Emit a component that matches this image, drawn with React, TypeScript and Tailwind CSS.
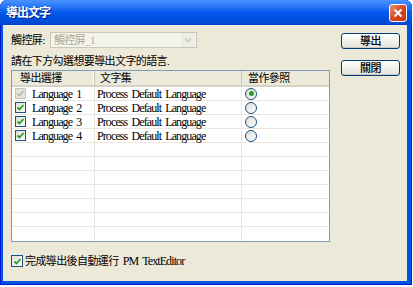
const rows = [
  { name: 'Language 1', set: 'Process Default Language', checked: true, disabled: true, ref: true },
  { name: 'Language 2', set: 'Process Default Language', checked: true, disabled: false, ref: false },
  { name: 'Language 3', set: 'Process Default Language', checked: true, disabled: false, ref: false },
  { name: 'Language 4', set: 'Process Default Language', checked: true, disabled: false, ref: false },
]

const empty = Array.from({ length: 7 })

function CheckBox({ checked, disabled, size = 11 }: { checked: boolean; disabled?: boolean; size?: number }) {
  return (
    <span
      className={
        'flex shrink-0 items-center justify-center border ' +
        (disabled ? 'border-[#C9C7BA] bg-[#E6E4DA]' : 'border-[#1C5180] bg-gradient-to-br from-[#DCDCD7] to-white')
      }
      style={{ width: size, height: size }}
    >
      {checked && (
        <svg width="9" height="9" viewBox="0 0 9 9">
          <path
            d="M1.5 4.5 L3.5 6.5 L7.5 2"
            fill="none"
            stroke={disabled ? '#BEBCB0' : '#21A121'}
            strokeWidth="1.8"
          />
        </svg>
      )}
    </span>
  )
}

function Radio({ on }: { on: boolean }) {
  return (
    <span className="flex h-[12px] w-[12px] items-center justify-center rounded-full border border-[#1C5180] bg-gradient-to-br from-[#DCDCD7] to-white">
      {on && <span className="h-[5px] w-[5px] rounded-full bg-[#21A121]" />}
    </span>
  )
}

function XpButton({ label }: { label: string }) {
  return (
    <button className="flex h-[16px] w-[59px] items-center justify-center rounded-[3px] border border-[#003C74] bg-gradient-to-b from-white to-[#E3E3DB] text-[11px] font-medium leading-none text-black shadow-[inset_0_-1px_0_#CDCAC3]">
      {label}
    </button>
  )
}

export default function App() {
  return (
    <div className="h-[287px] w-[413px] bg-white font-['Liberation_Serif','Noto_Sans_CJK_TC',serif] text-[11px] tracking-[-0.6px] text-black">
      <div className="flex h-[285px] w-[412px] flex-col overflow-hidden rounded-t-[7px] bg-[#0055E5] shadow-[inset_0_0_0_1px_#0019CF]">
        <div className="flex h-[25px] shrink-0 items-center justify-between bg-gradient-to-b from-[#4A94FF] via-[#0058EE] to-[#0047CC] pl-[6px] pr-[5px]">
          <span className="text-[12px] font-bold tracking-[-1px] text-white [text-shadow:1px_1px_0_#0A1E7A]">
            導出文字
          </span>
          <span className="flex h-[18px] w-[18px] items-center justify-center rounded-[3px] border border-white bg-gradient-to-br from-[#E9906E] via-[#D9461F] to-[#C0370F]">
            <svg width="10" height="10" viewBox="0 0 10 10">
              <path d="M1.5 1.5 L8.5 8.5 M8.5 1.5 L1.5 8.5" stroke="white" strokeWidth="2" />
            </svg>
          </span>
        </div>

        <div className="mb-[4px] ml-[3px] mr-[5px] flex flex-1 bg-[#ECE9D8] pl-[8px]">
          <div className="flex w-[319px] flex-col">
            <div className="mt-[7px] flex h-[16px] items-center">
              <span className="w-[39px]">觸控屏:</span>
              <div className="flex h-[16px] w-[147px] items-center border border-[#C9C7BA] bg-[#F5F4EA]">
                <span className="flex-1 pl-[3px] text-[#ACA899]">觸控屏_1</span>
                <span className="mr-px flex h-[14px] w-[14px] items-center justify-center bg-[#EEEDE5]">
                  <svg width="8" height="6" viewBox="0 0 8 6">
                    <path d="M1 1.5 L4 4.5 L7 1.5" fill="none" stroke="#C9C7BA" strokeWidth="1.4" />
                  </svg>
                </span>
              </div>
            </div>

            <p className="mt-[7px] h-[13px] leading-[13px]">請在下方勾選想要導出文字的語言.</p>

            <div className="mt-[2px] flex h-[172px] flex-col border border-[#7F9DB9] bg-white">
              <div className="flex h-[16px] shrink-0 border-b-2 border-[#D6D3C6] bg-[#EBEADB]">
                <div className="flex w-[83px] items-center border-r border-[#C7C5B2] pl-[8px] shadow-[inset_-1px_0_0_white]">導出選擇</div>
                <div className="flex w-[147px] items-center border-r border-[#C7C5B2] pl-[5px]">文字集</div>
                <div className="flex flex-1 items-center pl-[6px]">當作參照</div>
              </div>
              {rows.map((r) => (
                <div key={r.name} className="flex h-[14px] shrink-0 border-b border-[#EAE8DE] text-[12px] tracking-[-0.9px] [word-spacing:2px]">
                  <div className="flex w-[83px] items-center gap-[6px] border-r border-[#EAE8DE] pl-[3px]">
                    <CheckBox checked={r.checked} disabled={r.disabled} size={11} />
                    <span>{r.name}</span>
                  </div>
                  <div className="flex w-[147px] items-center border-r border-[#EAE8DE] pl-[2px]">{r.set}</div>
                  <div className="flex flex-1 items-center pl-[3px]">
                    <Radio on={r.ref} />
                  </div>
                </div>
              ))}
              {empty.map((_, i) => (
                <div key={i} className="flex h-[14px] shrink-0 border-b border-[#EAE8DE] last:border-b-0">
                  <div className="w-[83px] border-r border-[#EAE8DE]" />
                  <div className="w-[147px] border-r border-[#EAE8DE]" />
                  <div className="flex-1" />
                </div>
              ))}
            </div>

            <div className="mt-[10px] flex items-center gap-[2px]">
              <CheckBox checked size={12} />
              <span>
                完成導出後自動運行<span className="text-[12px] tracking-[-0.9px] [word-spacing:2px]"> PM TextEditor</span>
              </span>
            </div>
          </div>

          <div className="ml-[11px] flex flex-col gap-[11px] pt-[8px]">
            <XpButton label="導出" />
            <XpButton label="關閉" />
          </div>
        </div>
      </div>
    </div>
  )
}
